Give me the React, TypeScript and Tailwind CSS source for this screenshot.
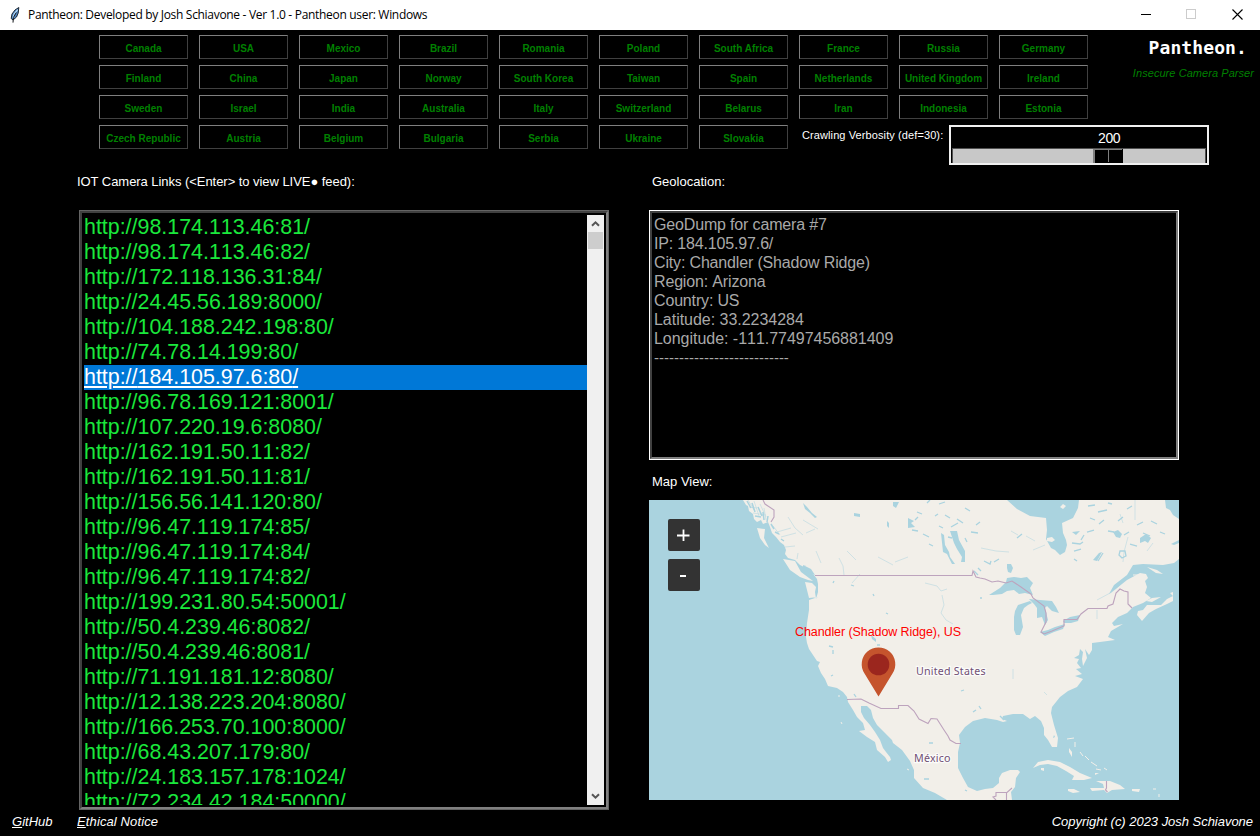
import React from "react";

const countries = [
  "Canada", "USA", "Mexico", "Brazil", "Romania", "Poland", "South Africa", "France", "Russia", "Germany",
  "Finland", "China", "Japan", "Norway", "South Korea", "Taiwan", "Spain", "Netherlands", "United Kingdom", "Ireland",
  "Sweden", "Israel", "India", "Australia", "Italy", "Switzerland", "Belarus", "Iran", "Indonesia", "Estonia",
  "Czech Republic", "Austria", "Belgium", "Bulgaria", "Serbia", "Ukraine", "Slovakia",
];

const links = [
  "98.174.113.46:81", "98.174.113.46:82", "172.118.136.31:84", "24.45.56.189:8000", "104.188.242.198:80",
  "74.78.14.199:80", "184.105.97.6:80", "96.78.169.121:8001", "107.220.19.6:8080", "162.191.50.11:82",
  "162.191.50.11:81", "156.56.141.120:80", "96.47.119.174:85", "96.47.119.174:84", "96.47.119.174:82",
  "199.231.80.54:50001", "50.4.239.46:8082", "50.4.239.46:8081", "71.191.181.12:8080", "12.138.223.204:8080",
  "166.253.70.100:8000", "68.43.207.179:80", "24.183.157.178:1024", "72.234.42.184:50000",
];

const geo = [
  "GeoDump for camera #7",
  "IP: 184.105.97.6/",
  "City: Chandler (Shadow Ridge)",
  "Region: Arizona",
  "Country: US",
];

const coordinates = ["Latitude: 33.2234284", "Longitude: -111.77497456881409"];

function TitleBar() {
  return (
    <header className="flex h-[30px] shrink-0 items-center bg-white pl-2 text-black">
      <svg width="14" height="18" viewBox="0 0 14 18" className="shrink-0">
        <path d="M10.8 1.5 L7 4 L4 8 L3.2 12.5 L5 14 L8.5 11 L10.2 7 Z" fill="#4f87c6" stroke="#1c2733" strokeWidth="1" />
        <path d="M9.6 3.6 L6.2 8 L5 12" fill="none" stroke="#b9dcf7" strokeWidth="1.3" />
        <path d="M8.3 6.5 L5.4 11.5 L5 16.6" fill="none" stroke="#15181c" strokeWidth="1" />
      </svg>
      <span className="ml-1.5 whitespace-pre font-['Open_Sans',sans-serif] text-[12px] tracking-[-0.31px]">
        Pantheon: Developed by Josh Schiavone - Ver 1.0 - Pantheon user: Windows
      </span>
      <svg className="ml-auto mr-[17px]" width="102" height="12" viewBox="0 0 102 12" fill="none">
        <path d="M0 5.5H10" stroke="#000" />
        <rect x="45.5" y="0.5" width="9" height="9" stroke="#ccc" />
        <path d="M91.5 0.5L101.5 10.5M101.5 0.5L91.5 10.5" stroke="#000" strokeWidth="1.1" />
      </svg>
    </header>
  );
}

function Verbosity() {
  return (
    <div className="col-span-3 flex h-10 w-[410px] items-start pl-[3px]">
      <span className="w-[147px] shrink-0 whitespace-nowrap pt-[3px] text-[11px] leading-[14px] tracking-[0.1px]">Crawling Verbosity (def=30):</span>
      <div className="flex h-10 w-[260px] shrink-0 flex-col border-2 border-[#f0f0f0] px-px">
        <div className="flex h-[21px] items-center pl-[146px] text-[14px] leading-none tracking-[-0.4px]">200</div>
        <div className="flex h-[15px] border-x border-t border-[#505050] bg-[#c8c8c8] pl-[140px]">
          <div className="flex w-[30px] bg-black">
            <div className="w-[15px] border-l-2 border-t border-[#7f7f7f]" />
            <div className="mb-px w-[14px] border-l border-t border-[#7f7f7f]" />
          </div>
        </div>
      </div>
    </div>
  );
}

function Controls() {
  return (
    <section className="flex h-[141px] shrink-0 justify-between pl-[99px] pt-[5px]">
      <div className="grid auto-rows-[24px] grid-cols-[repeat(10,89px)] content-start gap-x-[11px] gap-y-1.5">
        {countries.map((c) => (
          <button
            key={c}
            className="whitespace-nowrap border border-b-[#404040] border-l-[#7f7f7f] border-r-[#404040] border-t-[#7f7f7f] pt-[3px] text-center text-[10px] font-bold leading-[10px] text-[#008000]"
          >
            {c}
          </button>
        ))}
        <Verbosity />
      </div>
      <div className="flex flex-col items-end pr-[6px]">
        <span className="pr-[7px] pt-[3px] font-['DejaVu_Sans_Mono',monospace] text-[18px] font-bold leading-[20px] tracking-[0.1px]">Pantheon.</span>
        <span className="pt-[8px] text-[11px] italic leading-[14px] tracking-[0.06px] text-[#008000]">Insecure Camera Parser</span>
      </div>
    </section>
  );
}

function Arrow({ down = false }: { down?: boolean }) {
  return (
    <svg width="17" height="17" viewBox="0 0 17 17" className={down ? "rotate-180" : ""}>
      <path d="M5 10.8L8.5 7.3L12 10.8" fill="none" stroke="#555" strokeWidth="2" />
    </svg>
  );
}

function LinkList() {
  return (
    <div className="ml-[2px] flex h-[600px] w-[530px] border border-[#646464]">
      <div className="flex min-w-0 flex-1 border-2 border-b-[#808080] border-l-[#404040] border-r-[#808080] border-t-[#404040] py-[2px] pr-[2px]">
        <ul className="min-w-0 flex-1 overflow-hidden pl-[2px] text-[21.4px] text-[#1ae83c] [font-kerning:none]">
          {links.map((l, i) => (
            <li
              key={l}
              className={
                i === 6
                  ? "h-[25px] whitespace-nowrap bg-[#0078d7] leading-[25px] text-white underline decoration-2 underline-offset-2"
                  : "h-[25px] whitespace-nowrap leading-[25px]"
              }
            >
              http://{l}/
            </li>
          ))}
        </ul>
        <div className="flex w-[17px] flex-col bg-[#f0f0f0]">
          <Arrow />
          <div className="mx-px h-[17px] bg-[#cdcdcd]" />
          <div className="flex-1" />
          <Arrow down />
        </div>
      </div>
    </div>
  );
}

function MapView() {
  return (
    <div className="relative h-[300px] w-[530px] overflow-hidden">
      <svg width="530" height="300" viewBox="649 500 530 300" className="block">
        <rect x="649" y="500" width="530" height="300" fill="#aad3df" />
        <g fill="#f2efe9">
          <path d="M743 500L746 505L748 506L749 511L753 514L754 519L757 522L761 520L763 524L768 522L770 527L772 533L776 537L780 542L784 545L786 550L785 554L788 558L795 560L800 565L804 567L808 571L814 575L817 579L818 584L818 592L816 599L815 592L816 587L812 583L805 582L807 590L809 598L818 597L809 600L809 610L807 623L806 637L807 643L809 649L811 652L817 661L820 662L818 666L821 673L825 679L828 686L837 688L843 692L847 697L848 702L853 710L857 717L863 723L865 730L859 731L867 737L875 742L877 750L885 757L888 762L891 760L890 757L886 752L883 748L880 740L875 732L870 725L864 718L861 712L861 706L867 706L871 710L873 718L877 725L885 733L892 740L893 743L902 750L910 761L914 770L914 778L923 788L935 793L947 800L1012 800L1011 792L1015 787L1016 778L1020 772L1018 770L1010 770L1002 773L999 778L999 783L993 788L985 789L977 791L968 787L963 778L958 768L958 752L960 743L959 735L965 727L973 721L985 718L997 720L1003 722L1007 721L1002 719L1003 716L1013 714L1023 714L1030 719L1035 716L1041 721L1044 728L1044 735L1048 740L1052 747L1057 747L1058 738L1054 725L1051 713L1052 707L1060 697L1068 691L1077 687L1083 679L1075 676L1082 674L1076 669L1081 668L1077 663L1079 659L1074 658L1079 655L1080 649L1083 652L1082 659L1083 666L1087 658L1085 649L1089 655L1092 650L1092 643L1100 642L1115 640L1108 637L1111 631L1123 624L1114 626L1112 623L1118 617L1127 613L1133 607L1143 603L1151 598L1145 593L1147 587L1145 581L1148 578L1146 574L1140 573L1127 580L1117 588L1109 594L1114 585L1127 575L1133 565L1143 564L1163 565L1174 563L1179 559L1179 519L1173 515L1170 510L1166 508L1165 500L1079 500L1078 508L1073 518L1062 523L1063 533L1066 540L1067 545L1065 552L1060 555L1055 550L1051 548L1046 539L1047 530L1046 518L1030 516L1017 509L1007 500Z" />
          <path d="M783 559L795 561L801 572L813 581L808 580L800 577L790 570ZM757 528L765 529L764 538L769 548L765 545L760 538ZM1138 611L1143 610L1147 605L1161 605L1167 599L1173 596L1170 593L1173 592L1173 601L1167 604L1156 609L1149 613L1142 621L1137 615ZM1147 567L1157 570L1163 574L1156 573ZM1146 601L1152 598L1161 597L1152 602Z" />
          <path d="M1033 768L1038 762L1048 760L1060 762L1070 767L1080 773L1092 778L1084 780L1072 780L1074 776L1066 771L1057 766L1048 764L1040 765ZM1096 781L1110 781L1120 785L1125 789L1112 790L1107 793L1104 790L1092 791L1090 788L1104 788L1103 784ZM1068 789L1074 789L1080 792L1073 793L1068 791ZM1132 789L1140 789L1139 792L1132 791ZM1041 768L1044 768L1044 771L1041 770ZM1069 748L1072 752L1072 757L1069 752ZM1095 773L1099 773L1095 775Z" />
          <path d="M1047 538l5-1 3 3-3 2-5-1ZM1063 504l3 2-3 3-3-2Z" />
        </g>
        <g fill="none" stroke="#f2efe9" strokeWidth="1">
          <path d="M1067 739l7-1M1075 742v5M1080 752l3 4M1085 756l4 4M1091 762l6 4M1096 769l5 1M1104 768l3 2M1153 789h3M1159 794v3M841 722l1 2M838 696h2M907 769l2 1M1133 575h5" />
        </g>
        <g fill="#aad3df">
          <path d="M989 595L1000 588L1006 582L1007 578L1014 577L1021 578L1027 577L1033 583L1030 588L1033 595L1025 593L1019 594L1014 590L1007 591L1002 594L993 595Z" />
          <path d="M1030 601L1018 605L1015 611L1014 617L1014 630L1016 635L1020 635L1023 627L1021 615L1024 608L1028 605L1032 603Z" />
          <path d="M1029 599L1040 600L1052 601L1056 607L1059 613L1052 611L1047 606L1045 608L1048 620L1045 625L1042 617L1037 618L1037 608L1034 604Z" />
          <path d="M1040 632L1048 630L1055 627L1065 624L1063 629L1054 632L1045 636ZM1063 621L1070 617L1080 615L1078 621L1071 623L1064 623Z" />
          <path d="M950 531L957 531L959 540L965 551L965 562L961 562L962 557L957 549L954 543ZM941 533L944 535L945 545L949 552L950 557L955 564L952 564L947 554L943 552ZM1007 564l4 0 2 4-2 5-3-1-1-4Z" />
          <path d="M803 503l4 4 5 6 5 4-2 1-5-5-5-4ZM893 502l6 0-3 6-3-2ZM887 521l2 2 0 5-2-2ZM908 518l6 3-3 2 4 4-7 1ZM854 513l6 1 0 3-6-1ZM1093 560l6-7 3-1-5 9ZM1140 538l6-4 5 4-3 5-3-2-5 2ZM1113 532l5-2 4 4-2 4-4-1ZM1072 532l8-1-4 4ZM1171 544l8-4 0 3-5 2Z" />
          <path d="M871 635l5 4v3l-4-3ZM1054 735l1 2-2 1ZM854 694l3 3M803 565l8 4 4 6-4-1-8-6Z" />
        </g>
        <g fill="none" stroke="#aad3df" strokeWidth="1.3">
          <path d="M917 512l5 2M912 530l6 1M918 517l-3 3M923 534l6 3M927 503l3-3M935 516l3-2M939 526l4 2M945 515l5 3M948 537l4 1M957 519l6 4M965 508l5 3M971 532l7 1M965 538l2 4M976 525l4-3M984 561l6 3 1-3M974 571l4 4M978 568l3 3M980 598h2M994 562l5-3M1017 538l5-4M939 504l6-2M951 527l7-4" />
          <path d="M1072 543l8 1 3-2M1074 551l7-2M1081 540l3-5M1087 532l7-2M1090 518l5 2M1098 512l9-2M1099 524l5-4M1108 531l6 1M1124 535l5-3M1130 544l7 2M1137 525l6-3M1143 533l7 3M1118 521l5-4M1103 553l-5 8M1074 559l3 2" />
          <path d="M1088 506l7-1M1108 503l4 1M1127 509l5-3M1151 521l6 3M1160 532l5 2M1120 551l5 0 1 5-4 2-3-3ZM929 544l4 2M833 583l1-2M851 585l3 1M873 594l1 2M886 613l2 1M829 646l4 1M833 650v4M833 675l-2 1M854 694l2 3M877 645h3M979 706l2 3M973 712l3-2M927 798l4 0M929 743h4M924 779l5 0M964 690l-3 1M965 790l2 1M1000 716l4 4" />
        </g>
        <g fill="none" stroke="#aad3df" strokeWidth="0.8" opacity="0.6">
          <path d="M788 517l7 11 8 7M803 520l15 9M839 558l4 8 1 9M847 551l9 9M860 574l-8 9M816 551l5 12M878 557l15 8M895 562l13-5M925 583l12 3 4 5 6-2M942 595l2 10-3 8 5 7 7 4M1097 600l15-8 9-8M1097 610v9M1123 562l1-10 4-15M1026 536l9 5M1011 531l7 4M1033 550l12-5M981 548l15 3 13 1M1044 692l3 3M1013 669v10M806 533l9-4M1123 523l-3-9M1135 500v20M1147 551l6-8" />
          <path d="M748 500l6 10M754 501l5 15M760 504l6 13M764 508l2 12M773 526l7 9M777 532l14-4M781 537l15-4M785 547l10-1M797 559l1-6M805 565l-1 6M749 507l8 1M753 513l13 2" />
        </g>
        <g fill="none" stroke="#aad3df" strokeWidth="1.5">
          <path d="M747 501l4 7M752 503l3 9M758 507l4 9M763 512l1 8M768 516l-1 6M755 516l6 1M771 524l3 5M775 532l4 2M781 539l3 2" />
        </g>
        <g fill="none" stroke="#bda3bd" strokeWidth="1.1">
          <path d="M763 500L765 504L774 510L774 517L771 522" />
          <path d="M815 575.5H972L973 571L976 577L980 578L985 579L992 582L998 581L1006 583L1012 581L1021 587L1031 594L1033 598L1044 606L1046 613L1046 622L1041 632L1044 634L1052 631L1064 626L1064 619.5L1077 619.5L1081 614L1088 608.5L1107 608.5L1108 606L1113 604L1116 593L1120 589L1124 591L1128 592L1128 604L1132 608" />
          <path d="M847 699.5L861 699L869 703L881 708.5H898.5V705.5H908L914 711L919 719L928 723.5L931 718.5L937 719L944 730L948 736L950 740L956 743.5H961" />
          <path d="M996 800L993 797L996 796V792.5H1007L1012 788M1006.5 792V800M1106.5 781v7l-1 2 2 2" />
        </g>
        <g fill="#704f74" stroke="#fff" strokeWidth="2.4" strokeOpacity="0.75" paintOrder="stroke" className="font-['Noto_Sans',sans-serif] text-[10.7px]">
          <text x="916" y="675" textLength="69.5">United States</text>
          <text x="914" y="762" textLength="36.5">México</text>
        </g>
        <path d="M878.5 696.5L864.5 673.5A16.8 16.8 0 1 1 892.5 673.5Z" fill="#c5542d" />
        <circle cx="878.5" cy="664.5" r="10.8" fill="#9b261e" />
        <text x="795" y="636" textLength="166" fill="#ff0000" className="text-[12.5px]">Chandler (Shadow Ridge), US</text>
      </svg>
      <div className="absolute left-[19px] top-[19px] flex flex-col gap-2">
        <button aria-label="Zoom in" className="flex size-8 items-center justify-center rounded-[2px] bg-[#333]">
          <svg width="14" height="14" viewBox="0 0 14 14"><path d="M0 7.5H12.5M6.5 1.5V13" stroke="#fff" strokeWidth="1.8" /></svg>
        </button>
        <button aria-label="Zoom out" className="flex size-8 items-center justify-center rounded-[2px] bg-[#333]">
          <svg width="14" height="14" viewBox="0 0 14 14"><path d="M3 8H9" stroke="#fff" strokeWidth="2" /></svg>
        </button>
      </div>
    </div>
  );
}

export default function App() {
  return (
    <div className="flex h-[836px] w-[1260px] flex-col overflow-hidden bg-black font-['Liberation_Sans',Arial,sans-serif] text-white">
      <TitleBar />
      <Controls />
      <main className="flex h-[639px] shrink-0 pl-[77px]">
        <section className="flex w-[572px] flex-col">
          <h2 className="flex h-[39px] items-start whitespace-nowrap pt-[2px] text-[13px] leading-[17px] tracking-[-0.05px]">
            IOT Camera Links (&lt;Enter&gt; to view LIVE● feed):
          </h2>
          <LinkList />
        </section>
        <section className="flex w-[530px] flex-col">
          <h2 className="h-[39px] pl-[3px] pt-[2px] text-[13px] leading-[17px]">Geolocation:</h2>
          <div className="flex h-[250px] border border-white">
            <div className="flex-1 border-2 border-b-[#808080] border-l-[#404040] border-r-[#808080] border-t-[#404040] pl-[2px] pt-[2px] text-[16px] leading-[19px] text-[#a9a9a9] [font-kerning:none]">
              {geo.map((g) => (
                <p key={g} className="tracking-[-0.16px]">{g}</p>
              ))}
              {coordinates.map((c) => (
                <p key={c} className="tracking-[-0.03px]">{c}</p>
              ))}
              <p className="text-[15px]">---------------------------</p>
            </div>
          </div>
          <h2 className="h-10 pl-[3px] pt-[13px] text-[13px] leading-[17px]">Map View:</h2>
          <MapView />
        </section>
      </main>
      <footer className="flex h-[22px] shrink-0 items-center pl-3 pr-[7px] text-[13px] italic leading-none">
        <span className="w-[65px]"><u>G</u>itHub</span>
        <span className="tracking-[0.12px]"><u>E</u>thical Notice</span>
        <span className="ml-auto tracking-[-0.03px]">Copyright (c) 2023 Josh Schiavone</span>
      </footer>
    </div>
  );
}
